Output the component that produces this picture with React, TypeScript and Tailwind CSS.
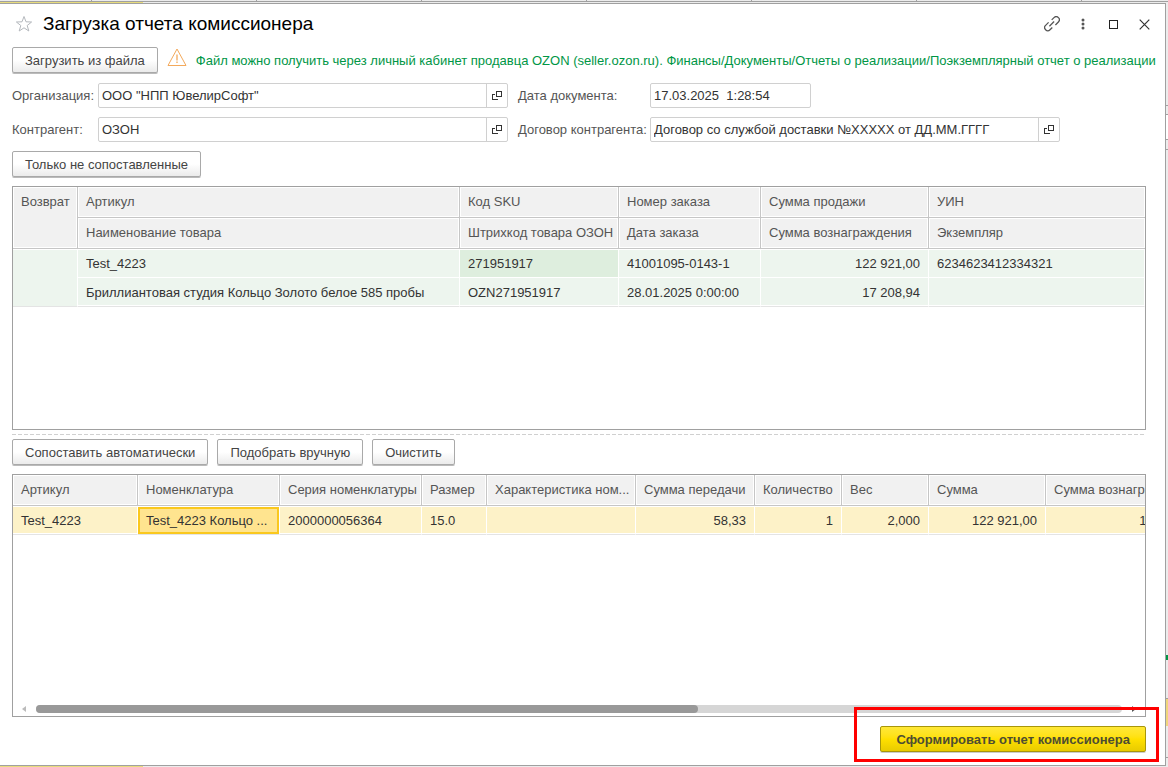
import React from "react";

interface Column {
  title: string;
  width?: string;
  align?: string;
}

interface FieldProps {
  id: string;
  label: string;
  value: string;
  labelClass?: string;
  short?: boolean;
}

// top table: every column has two lines (header and data)
const reportColumns = [
  { top: "Артикул", bottom: "Наименование товара" },
  { top: "Код SKU", bottom: "Штрихкод товара ОЗОН" },
  { top: "Номер заказа", bottom: "Дата заказа" },
  { top: "Сумма продажи", bottom: "Сумма вознаграждения" },
  { top: "УИН", bottom: "Экземпляр" },
];

const reportRow = [
  { top: "Test_4223", bottom: "Бриллиантовая студия Кольцо Золото белое 585 пробы" },
  { top: "271951917", bottom: "OZN271951917", active: true },
  { top: "41001095-0143-1", bottom: "28.01.2025 0:00:00" },
  { top: "122 921,00", bottom: "17 208,94", right: true },
  { top: "6234623412334321", bottom: "" },
];

const itemColumns: Column[] = [
  { title: "Артикул", width: "w-[125px]" },
  { title: "Номенклатура", width: "w-[142px]" },
  { title: "Серия номенклатуры", width: "w-[142px]" },
  { title: "Размер", width: "w-[65px]" },
  { title: "Характеристика ном...", width: "w-[149px]" },
  { title: "Сумма передачи", width: "w-[119px]", align: "text-right" },
  { title: "Количество", width: "w-[87px]", align: "text-right" },
  { title: "Вес", width: "w-[87px]", align: "text-right" },
  { title: "Сумма", width: "w-[117px]", align: "text-right" },
  { title: "Сумма вознаграждения", width: "w-[160px]", align: "text-right" },
];

const itemRow = [
  "Test_4223",
  "Test_4223 Кольцо ...",
  "2000000056364",
  "15.0",
  "",
  "58,33",
  "1",
  "2,000",
  "122 921,00",
  "17 208,94",
];

const headCell =
  "border-r border-b border-[#c6c6c6] bg-[#f1f1f1] pr-1 pl-2 text-left font-normal whitespace-nowrap text-[#555] shadow-[inset_0_0_0_1px_#fff]";

function OpenIcon() {
  return (
    <svg width="10" height="9" viewBox="0 0 10 9" fill="none" stroke="#333" shapeRendering="crispEdges">
      <path d="M4.500.5h5v5h-5z" />
      <path d="M2.500 3.500h-2v5h5v-1" />
    </svg>
  );
}

function Button({ children }: { children: React.ReactNode }) {
  return (
    <button
      type="button"
      className="h-[26px] shrink-0 rounded-[2px] border border-[#a9a9a9] bg-linear-to-b from-white from-50% to-[#ebebeb] px-3 pt-0.5 text-[#444] shadow-[0_1px_0_#bbb]"
    >
      {children}
    </button>
  );
}

function Field({ id, label, value, labelClass = "", short = false }: FieldProps) {
  return (
    <>
      <label htmlFor={id} className={`whitespace-nowrap text-[#555] ${labelClass}`}>
        {label}
      </label>
      <div className={`flex h-[25px] rounded-[2px] border border-[#d0d0d0] bg-white ${short ? "w-[161px]" : ""}`}>
        <input id={id} type="text" defaultValue={value} className="min-w-0 flex-1 bg-transparent px-[3px] text-[#333] outline-none" />
        {!short && (
          <button type="button" aria-label="Открыть" className="flex w-[21px] items-center justify-center border-l border-[#d0d0d0]">
            <OpenIcon />
          </button>
        )}
      </div>
    </>
  );
}

function TitleBar() {
  return (
    <header className="flex h-10 items-center justify-between">
      <div className="flex items-center gap-[10px]">
        <button type="button" aria-label="В избранное" className="pl-[3px]">
          <svg width="18" height="18" viewBox="0 0 18 18" fill="none" stroke="#b4b8bd">
            <path d="M9 1.500l2 5.300 5.600.2-4.400 3.500 1.600 5.500L9 12.800 4.200 16l1.600-5.500L1.400 7l5.600-.2z" />
          </svg>
        </button>
        <h1 className="text-[19px] text-black">Загрузка отчета комиссионера</h1>
      </div>
      <div className="-mr-1 flex items-center gap-[18px]">
        <button type="button" aria-label="Ссылка">
          <svg width="16" height="16" viewBox="0 0 16 16" fill="none" stroke="#555" strokeWidth="1.3">
            <path d="M7.700 3.900L10 1.600a3.100 3.100 0 0 1 4.400 4.400L11.400 9" />
            <path d="M4.600 6.400L1.600 9.400a3.100 3.100 0 0 0 4.400 4.400L8.300 11.500" />
            <path d="M5.400 10.200l4.700-4.700" />
          </svg>
        </button>
        <button type="button" aria-label="Ещё">
          <svg width="10" height="14" viewBox="0 0 10 14" fill="#555">
            <circle cx="5" cy="3" r="1.500" />
            <circle cx="5" cy="7" r="1.500" />
            <circle cx="5" cy="11" r="1.500" />
          </svg>
        </button>
        <button type="button" aria-label="Развернуть">
          <svg width="15" height="15" viewBox="0 0 15 15" fill="none" stroke="#222" shapeRendering="crispEdges">
            <path d="M3.500 3.500h8v8h-8z" />
          </svg>
        </button>
        <button type="button" aria-label="Закрыть">
          <svg width="11" height="11" viewBox="0 0 11 11" stroke="#333" strokeWidth="1.200">
            <path d="M.7.7l9.600 9.600M10.300.7L.7 10.300" />
          </svg>
        </button>
      </div>
    </header>
  );
}

function ReportTable() {
  return (
    <div className="flex-1 overflow-hidden border border-[#a0a0a0] bg-white">
      <table className="w-full table-fixed border-separate border-spacing-0">
        <colgroup>
          <col className="w-[65px]" />
          <col className="w-[382px]" />
          <col className="w-[159px]" />
          <col className="w-[142px]" />
          <col className="w-[168px]" />
          <col />
        </colgroup>
        <thead>
          <tr className="h-[31px]">
            <th rowSpan={2} className={`${headCell} pt-[5px] align-top`}>
              Возврат
            </th>
            {reportColumns.map((col) => (
              <th key={col.top} className={`${headCell} last:border-r-0`}>
                {col.top}
              </th>
            ))}
          </tr>
          <tr className="h-[31px]">
            {reportColumns.map((col) => (
              <th key={col.bottom} className={`${headCell} last:border-r-0`}>
                {col.bottom}
              </th>
            ))}
          </tr>
        </thead>
        <tbody className="text-[#333]">
          <tr className="h-[29px]">
            <td rowSpan={2} className="border-t border-r border-b border-t-white border-r-white border-b-[#e4e4e4] bg-[#edf5ee]" />
            {reportRow.map((cell) => (
              <td
                key={cell.top}
                className={`border-t border-r border-b border-white px-2 pt-px ${cell.active ? "bg-[#deeede]" : "bg-[#edf5ee]"} ${cell.right ? "text-right" : ""}`}
              >
                {cell.top}
              </td>
            ))}
          </tr>
          <tr className="h-[29px]">
            {reportRow.map((cell) => (
              <td
                key={cell.top}
                className={`border-r border-b border-r-white border-b-[#e4e4e4] bg-[#edf5ee] px-2 pt-0.5 whitespace-nowrap shadow-[inset_0_-1px_0_#fff] ${cell.right ? "text-right" : ""}`}
              >
                {cell.bottom}
              </td>
            ))}
          </tr>
        </tbody>
      </table>
    </div>
  );
}

function ItemsTable() {
  return (
    <div className="flex flex-1 flex-col justify-between overflow-hidden border border-[#a0a0a0] bg-white">
      <div className="overflow-hidden">
        <table className="w-[1193px] table-fixed border-separate border-spacing-0">
          <thead>
            <tr className="h-[31px]">
              {itemColumns.map((col) => (
                <th key={col.title} className={`${headCell} ${col.width}`}>
                  {col.title}
                </th>
              ))}
            </tr>
          </thead>
          <tbody className="text-[#333]">
            <tr className="h-[29px]">
              {itemRow.map((text, i) => (
                <td
                  key={itemColumns[i].title}
                  className={`border-t border-r border-b border-t-white border-r-white border-b-[#e4e4e4] px-2 pt-px whitespace-nowrap ${itemColumns[i].align ?? ""} ${
                    i === 1 ? "bg-[#ffe48f] shadow-[inset_0_0_0_2px_#fac81e]" : "bg-[#fdf2c8] shadow-[inset_0_-1px_0_#fff]"
                  }`}
                >
                  {text}
                </td>
              ))}
            </tr>
          </tbody>
        </table>
      </div>

      {/* horizontal scroll bar */}
      <div className="mb-[3px] flex items-center gap-[10px] px-[9px]">
        <svg width="4" height="6" viewBox="0 0 4 6" fill="#bbb">
          <path d="M4 0v6L0 3z" />
        </svg>
        <div className="h-2 flex-1 rounded-full bg-[#d6d6d6]">
          <div className="h-2 w-[61%] rounded-full bg-[#999]" />
        </div>
        <svg width="4" height="6" viewBox="0 0 4 6" fill="#555">
          <path d="M0 0v6l4-3z" />
        </svg>
      </div>
    </div>
  );
}

export default function App() {
  return (
    <div className="flex min-h-screen flex-col bg-[#ececec] font-['Liberation_Sans',Arial,sans-serif] text-[13px] leading-5">
      {/* tabs of the main window above the form */}
      <div className="flex h-0.5 overflow-hidden border-b border-[#a0a0a0]">
        <div className="w-[92px] shrink-0 border-r border-[#a0a0a0]" />
        {[1, 2, 3, 4, 5, 6].map((n) => (
          <div key={n} className="w-[165px] shrink-0 border-r border-[#a0a0a0]" />
        ))}
      </div>
      <div className="h-px w-[143px] bg-[#e8dc7c]" />

      <div className="flex flex-1">
        <main className="flex min-w-0 flex-1 flex-col border-t border-r border-b border-[#a0a0a0] bg-white pr-[19px] pb-[13px] pl-3">
          <TitleBar />
          <div className="mt-[3px] flex flex-1 flex-col gap-[9px]">
            <div className="flex h-[27px] items-start">
              <Button>Загрузить из файла</Button>
              <svg className="mx-[9px] shrink-0" width="20" height="20" viewBox="0 0 20 20" fill="none" stroke="#f3a95b">
                <path d="M10 2L19 18.500H1z" />
                <path d="M10 7.500v6M10 14.500v1.500" strokeWidth="1.300" />
              </svg>
              <p className="pt-1 whitespace-nowrap text-[#009646]">
                Файл можно получить через личный кабинет продавца OZON (seller.ozon.ru). Финансы/Документы/Отчеты о
                реализации/Поэкземплярный отчет о реализации
              </p>
            </div>

            <div className="grid grid-cols-[86px_minmax(0,410px)_142px_minmax(0,410px)] items-center gap-y-[9px]">
              <Field id="org" label="Организация:" value={'ООО "НПП ЮвелирСофт"'} />
              <Field id="date" label="Дата документа:" value="17.03.2025  1:28:54" labelClass="pl-[10px]" short />
              <Field id="partner" label="Контрагент:" value="ОЗОН" />
              <Field
                id="contract"
                label="Договор контрагента:"
                value="Договор со службой доставки №XXXXX от ДД.ММ.ГГГГ"
                labelClass="pl-[10px]"
              />
            </div>

            <div className="flex">
              <Button>Только не сопоставленные</Button>
            </div>

            <div className="flex flex-1 flex-col">
              <ReportTable />
              <div className="my-1 h-px bg-[repeating-linear-gradient(90deg,#d0d0d0_0_4px,#fff_4px_6px)]" />
              <div className="mb-[9px] flex gap-[9px]">
                <Button>Сопоставить автоматически</Button>
                <Button>Подобрать вручную</Button>
                <Button>Очистить</Button>
              </div>
              <ItemsTable />
            </div>

            <div className="flex justify-end">
              <div className="relative">
                <button
                  type="button"
                  className="block h-[26px] rounded-[2px] border border-[#a8960a] bg-linear-to-b from-[#ffe836] via-[#ffe000] to-[#e8cb00] px-[15px] pt-0.5 font-bold text-[#4d4d33] shadow-[0_1px_0_#ccc]"
                >
                  Сформировать отчет комиссионера
                </button>
                {/* red highlight frame */}
                <div className="pointer-events-none absolute -top-[19px] -right-[13px] -bottom-[10px] -left-[26px] border-3 border-[#ff0000]" />
              </div>
            </div>
          </div>
        </main>

        {/* edge of the main window to the right */}
        <div className="flex w-[2px] flex-col">
          <div className="h-[102px]" />
          <div className="h-[10px] border-y border-[#a0a0a0]" />
          <div className="h-[25px] border-b border-[#a0a0a0] bg-white" />
          <div className="h-[10px] border-b border-[#a0a0a0]" />
          <div className="flex-1" />
          <div className="h-[5px] bg-[#009646]" />
          <div className="h-[39px] border-b border-[#a0a0a0]" />
          <div className="h-[27px] bg-[#f0d67c]" />
          <div className="h-[32px] border-b border-[#a0a0a0]" />
          <div className="h-2" />
        </div>
      </div>
      <div className="h-px w-[143px] bg-[#e8dc7c]" />
    </div>
  );
}
